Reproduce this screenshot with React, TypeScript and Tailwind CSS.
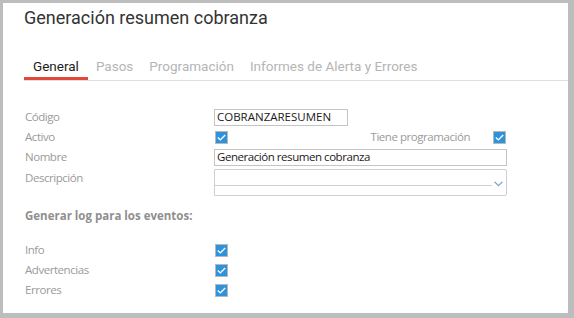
import React from "react";

function Check() {
  return (
    <span className="flex h-[13px] w-[13px] items-center justify-center border border-[#b8b8b8] bg-[#2d93dd]">
      <svg width="9" height="7" viewBox="0 0 9 7" fill="none">
        <path d="M0.8 3.6 L3.3 5.9 L8.2 0.9" stroke="#ffffff" strokeWidth="1.4" />
      </svg>
    </span>
  );
}

const label = "text-[11.5px] leading-[16px] tracking-[-0.45px] text-[#9a9a9a]";

export default function App() {
  const tabs = ["General", "Pasos", "Programación", "Informes de Alerta y Errores"];

  return (
    <div className="h-[318px] w-[574px] border-t-[3px] border-r-[6px] border-b-[5px] border-l-[3px] border-[#bdbdbd] bg-white font-['Open_Sans',sans-serif]">
      <h1 className="pl-[21px] pt-[3px] font-['Roboto',sans-serif] text-[18px] leading-[24px] text-[#333]">
        Generación resumen cobranza
      </h1>

      {/* tabs */}
      <div className="mt-[28px] ml-[21px] flex border-b border-[#dedede] font-['Roboto',sans-serif] text-[13.5px] leading-[16px]">
        {tabs.map((t, i) => (
          <div
            key={t}
            className={
              i === 0
                ? "border-b-[3px] border-[#e0493a] px-[9px] pb-[3px] text-[#222]"
                : "px-[8px] pb-[6px] text-[#b5b5b5]"
            }
          >
            {t}
          </div>
        ))}
      </div>

      {/* form */}
      <div className="mt-[26px] pl-[22px] pr-[61px]">
        <div className="flex h-[20px] items-center">
          <div className={`w-[189px] ${label}`}>Código</div>
          <div className="flex h-[17px] w-[134px] items-center border border-[#c4c4c4] px-[2px] text-[11.5px] text-[#1a1a1a]">
            COBRANZARESUMEN
          </div>
        </div>
        <div className="flex h-[20px] items-center">
          <div className={`w-[189px] ${label}`}>Activo</div>
          <div className="ml-[1px]">
            <Check />
          </div>
          <div className={`ml-auto mr-[23px] ${label}`}>Tiene programación</div>
          <div className="mr-[1px]">
            <Check />
          </div>
        </div>
        <div className="flex h-[20px] items-center">
          <div className={`w-[189px] ${label}`}>Nombre</div>
          <div className="flex h-[17px] flex-1 items-center border border-[#c4c4c4] px-[2px] text-[11.5px] tracking-[-0.45px] text-[#1a1a1a]">
            Generación resumen cobranza
          </div>
        </div>
        <div className="flex h-[30px] items-start pt-[2px]">
          <div className={`w-[189px] pt-[1px] ${label}`}>Descripción</div>
          <div className="relative h-[27px] flex-1 rounded-r-[2px] border border-[#cfcfcf]">
            <div className="mr-[14px] mt-[15px] border-b border-[#cfcfcf]" />
            <svg
              className="absolute right-[3px] top-[11px]"
              width="9"
              height="6"
              viewBox="0 0 9 6"
              fill="none"
            >
              <path d="M0.6 0.8 L4.5 4.6 L8.4 0.8" stroke="#7aa6d6" strokeWidth="1.2" />
            </svg>
          </div>
        </div>

        <div className="mt-[11px] text-[11.5px] leading-[16px] font-bold text-[#8f8f8f]">
          Generar log para los eventos:
        </div>

        <div className="mt-[16px]">
          {["Info", "Advertencias", "Errores"].map((t) => (
            <div key={t} className="flex h-[20px] items-center">
              <div className={`w-[189px] ${label}`}>{t}</div>
              <div className="ml-[1px]">
                <Check />
              </div>
            </div>
          ))}
        </div>
      </div>
    </div>
  );
}
